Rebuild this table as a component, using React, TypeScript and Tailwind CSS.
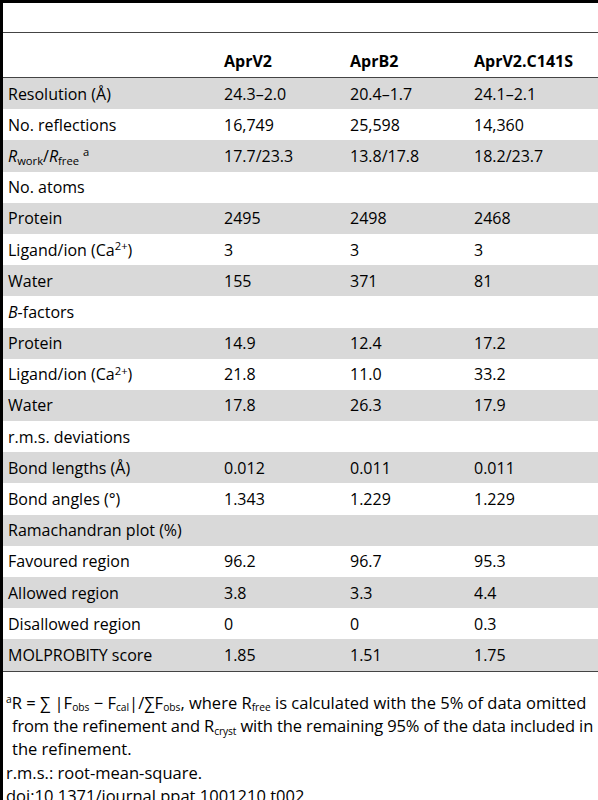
const rows: { label: React.ReactNode; v: string[]; }[] = [
  { label: 'Resolution (Å)', v: ['24.3–2.0', '20.4–1.7', '24.1–2.1'] },
  { label: 'No. reflections', v: ['16,749', '25,598', '14,360'] },
  {
    label: (
      <>
        <i>R</i>
        <sub className="text-[0.7em]">work</sub>/<i>R</i>
        <sub className="text-[0.7em]">free</sub> <sup className="text-[0.7em]">a</sup>
      </>
    ),
    v: ['17.7/23.3', '13.8/17.8', '18.2/23.7'],
  },
  { label: 'No. atoms', v: ['', '', ''] },
  { label: 'Protein', v: ['2495', '2498', '2468'] },
  { label: <>Ligand/ion (Ca<sup className="text-[0.7em]">2+</sup>)</>, v: ['3', '3', '3'] },
  { label: 'Water', v: ['155', '371', '81'] },
  { label: <><i>B</i>-factors</>, v: ['', '', ''] },
  { label: 'Protein', v: ['14.9', '12.4', '17.2'] },
  { label: <>Ligand/ion (Ca<sup className="text-[0.7em]">2+</sup>)</>, v: ['21.8', '11.0', '33.2'] },
  { label: 'Water', v: ['17.8', '26.3', '17.9'] },
  { label: 'r.m.s. deviations', v: ['', '', ''] },
  { label: 'Bond lengths (Å)', v: ['0.012', '0.011', '0.011'] },
  { label: 'Bond angles (°)', v: ['1.343', '1.229', '1.229'] },
  { label: 'Ramachandran plot (%)', v: ['', '', ''] },
  { label: 'Favoured region', v: ['96.2', '96.7', '95.3'] },
  { label: 'Allowed region', v: ['3.8', '3.3', '4.4'] },
  { label: 'Disallowed region', v: ['0', '0', '0.3'] },
  { label: 'MOLPROBITY score', v: ['1.85', '1.51', '1.75'] },
];

const cols = 'grid grid-cols-[216px_126px_124px_1fr] pl-[5px]';

export default function App() {
  return (
    <div className="min-h-[800px] w-full border-l-[3px] border-t-[3px] border-black bg-white font-['Open_Sans',sans-serif] text-[16px] text-black">
      {/* caption space */}
      <div className="h-[30px] border-b border-[#444]" />

      {/* header */}
      <div className={`${cols} h-[45px] items-center border-b border-[#444] pt-[12px] font-bold`}>
        <div />
        <div>AprV2</div>
        <div>AprB2</div>
        <div>AprV2.C141S</div>
      </div>

      {/* body */}
      <div className="border-b border-[#444]">
        {rows.map((row, i) => (
          <div
            key={i}
            className={`${cols} h-[31.2px] items-center leading-none ${i % 2 === 0 ? 'bg-[#d9d9d9]' : 'bg-white'}`}
          >
            <div className="whitespace-nowrap">{row.label}</div>
            {row.v.map((val, j) => (
              <div key={j}>{val}</div>
            ))}
          </div>
        ))}
      </div>

      {/* footnotes */}
      <div className="whitespace-nowrap pl-[3px] pt-[19px] text-[16.5px] leading-[23.4px]">
        <p>
          <sup className="text-[0.62em]">a</sup>R = ∑ |F<sub className="text-[0.62em]">obs</sub> − F
          <sub className="text-[0.62em]">cal</sub>|/∑F<sub className="text-[0.62em]">obs</sub>, where R
          <sub className="text-[0.62em]">free</sub> is calculated with the 5% of data omitted
        </p>
        <p className="pl-[6px] tracking-[-0.12px]">
          from the refinement and R<sub className="text-[0.62em]">cryst</sub> with the remaining 95% of the data included in
        </p>
        <p className="pl-[6px]">the refinement.</p>
        <p>r.m.s.: root-mean-square.</p>
        <p>doi:10.1371/journal.ppat.1001210.t002</p>
      </div>
    </div>
  );
}
